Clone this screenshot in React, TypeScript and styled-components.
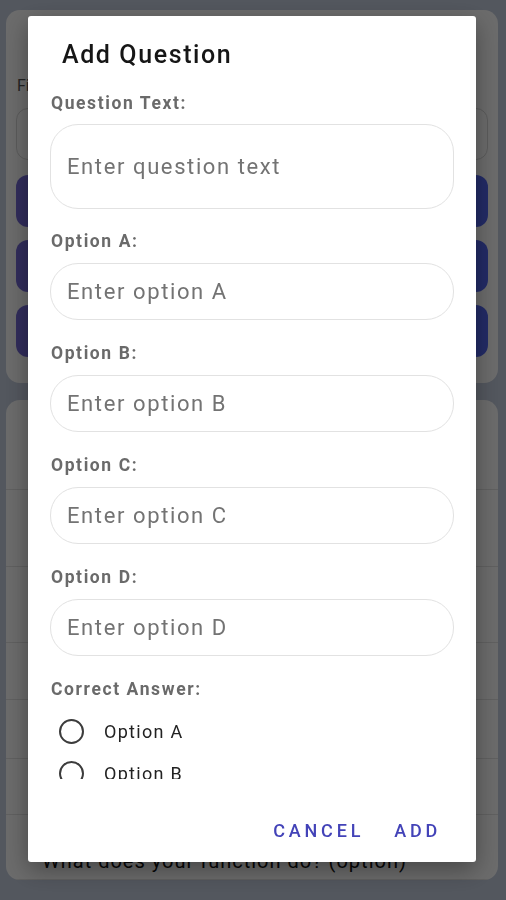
import React from "react";
import styled, { createGlobalStyle } from "styled-components";

const GlobalStyle = createGlobalStyle`
  html, body {
    margin: 0;
    padding: 0;
  }
  body {
    width: 506px;
    height: 900px;
    overflow: hidden;
    background: #c6cfe0;
    font-family: Roboto, "Liberation Sans", sans-serif;
  }
`;

type RowType = { h: number; text: string };

const rows: RowType[] = [
  { h: 90, text: "What is the output of print(2 ** 3)?" },
  { h: 77, text: "Which keyword defines a function?" },
  { h: 76, text: "What does len() return for a list?" },
  { h: 57, text: "Which type is immutable?" },
  { h: 59, text: "What is a lambda expression?" },
  { h: 56, text: "How do you open a file?" },
  { h: 65, text: "What does your function do? (option)" },
];

const options = ["Option A", "Option B", "Option C", "Option D"];

const App = () => {
  return (
    <>
      <GlobalStyle />
      <Screen>
        <TopCard>
          <CardLabel>Filter questions</CardLabel>
          <CardInput />
          <PrimaryButton>Add Question</PrimaryButton>
          <PrimaryButton>Import Questions</PrimaryButton>
          <PrimaryButton>Start Quiz</PrimaryButton>
        </TopCard>
        <ListCard>
          {rows.map((row, index) => (
            <Row key={index} $h={row.h}>
              <RowText>{row.text}</RowText>
            </Row>
          ))}
        </ListCard>
      </Screen>

      <Backdrop />

      <Dialog>
        <Title>Add Question</Title>
        <Body>
          <Field $first>
            <Label $first>Question Text:</Label>
            <TextBox $tall placeholder="Enter question text" />
          </Field>
          {["A", "B", "C", "D"].map((letter) => (
            <Field key={letter}>
              <Label>Option {letter}:</Label>
              <TextBox placeholder={`Enter option ${letter}`} />
            </Field>
          ))}
          <Label $first>Correct Answer:</Label>
          <RadioGroup>
            {options.map((opt) => (
              <RadioRow key={opt}>
                <RadioCircle />
                <RadioText>{opt}</RadioText>
              </RadioRow>
            ))}
          </RadioGroup>
        </Body>
        <Actions>
          <TextButton>Cancel</TextButton>
          <TextButton>Add</TextButton>
        </Actions>
      </Dialog>
    </>
  );
};

export default App;

/* background screen */

const Screen = styled.div`
  height: 900px;
  display: flex;
  flex-direction: column;
  gap: 17px;
  padding: 10px 8px 20px 6px;
  box-sizing: border-box;
`;

const TopCard = styled.div`
  background: #ffffff;
  border-radius: 14px;
  height: 373px;
  box-sizing: border-box;
  padding: 66px 10px 20px 10px;
  display: flex;
  flex-direction: column;
  gap: 13px;
`;

const CardLabel = styled.div`
  font-size: 16px;
  color: #555;
  padding-left: 1px;
`;

const CardInput = styled.div`
  height: 50px;
  border: 1px solid #d8d8d8;
  border-radius: 12px;
  margin-bottom: 2px;
`;

const PrimaryButton = styled.button`
  height: 52px;
  border: none;
  border-radius: 12px;
  background: linear-gradient(90deg, #756ad8, #5266f2);
  color: #fff;
  font-family: Roboto, "Liberation Sans", sans-serif;
  font-size: 16px;
  font-weight: 500;
`;

const ListCard = styled.div`
  flex: 1;
  background: #ffffff;
  border-radius: 14px;
  overflow: hidden;
`;

const Row = styled.div<{ $h: number }>`
  height: ${(p) => p.$h}px;
  border-bottom: 1px solid #e4e4e4;
  display: flex;
  align-items: flex-end;
  padding: 0 0 6px 36px;
  box-sizing: border-box;
`;

const RowText = styled.div`
  font-size: 20px;
  letter-spacing: 1px;
  color: #111;
  white-space: nowrap;
`;

/* dialog */

const Backdrop = styled.div`
  position: fixed;
  inset: 0;
  background: rgba(0, 0, 0, 0.58);
`;

const Dialog = styled.div`
  position: fixed;
  top: 16px;
  left: 28px;
  width: 448px;
  height: 846px;
  background: #ffffff;
  border-radius: 3px;
  box-shadow: 0 8px 24px rgba(0, 0, 0, 0.35);
  display: flex;
  flex-direction: column;
`;

const Title = styled.h2`
  margin: 0;
  padding: 23px 0 0 34px;
  font-size: 25px;
  line-height: 32px;
  font-weight: 500;
  letter-spacing: 1.6px;
  color: #161616;
`;

const Body = styled.div`
  height: 708px;
  overflow: hidden;
  padding: 22px 22px 0 22px;
  box-sizing: border-box;
`;

const Field = styled.div<{ $first?: boolean }>`
  margin-bottom: ${(p) => (p.$first ? "22px" : "23px")};
`;

const Label = styled.div<{ $first?: boolean }>`
  font-size: 17.5px;
  line-height: 20px;
  font-weight: 700;
  letter-spacing: 1.6px;
  color: #6a6a6a;
  margin-bottom: ${(p) => (p.$first ? "11px" : "12px")};
  padding-left: 1px;
`;

const TextBox = styled.input<{ $tall?: boolean }>`
  display: block;
  width: 100%;
  height: ${(p) => (p.$tall ? "85px" : "57px")};
  box-sizing: border-box;
  border: 1px solid #e2e2e2;
  border-radius: 28px;
  padding: 0 16px;
  font-family: Roboto, "Liberation Sans", sans-serif;
  font-size: 22px;
  letter-spacing: 1.6px;
  color: #222;
  outline: none;
  &::placeholder {
    color: #737373;
  }
`;

const RadioGroup = styled.div`
  display: flex;
  flex-direction: column;
  padding-left: 9px;
`;

const RadioRow = styled.div`
  height: 42px;
  display: flex;
  align-items: center;
  gap: 20px;
`;

const RadioCircle = styled.span`
  flex: none;
  width: 25px;
  height: 25px;
  box-sizing: border-box;
  border: 2px solid #3c3c3c;
  border-radius: 50%;
`;

const RadioText = styled.span`
  font-size: 18px;
  letter-spacing: 1.3px;
  color: #222;
`;

const Actions = styled.div`
  flex: 1;
  display: flex;
  justify-content: flex-end;
  align-items: flex-start;
  gap: 30px;
  padding: 42px 35px 0 0;
`;

const TextButton = styled.button`
  border: none;
  background: none;
  padding: 0;
  font-family: Roboto, "Liberation Sans", sans-serif;
  font-size: 18px;
  line-height: 20px;
  font-weight: 500;
  letter-spacing: 3.8px;
  text-transform: uppercase;
  color: #4343b8;
`;
